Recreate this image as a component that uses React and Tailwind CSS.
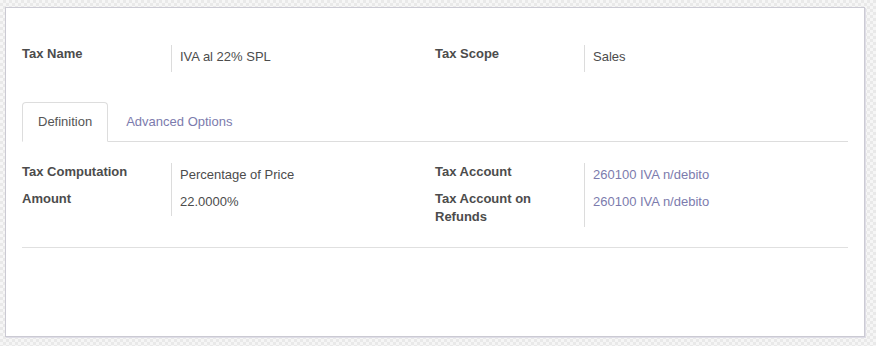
const Field = ({ label, children }) => (
    <>
        <div className="font-bold text-[#4c4c4c] leading-[1.42857]">{label}</div>
        <div className="border-l border-[#dcdcdc] pl-2 pt-[3px] pb-[5px] leading-[1.42857] text-[#4c4c4c]">
            {children}
        </div>
    </>
);

const Link = ({ children }) => <span className="text-[#7c7bad]">{children}</span>;

const App = () => {
    return (
        <div className="w-[876px] h-[346px] pl-[5px] pt-[7px] bg-[#f0f0f0] bg-[image:repeating-conic-gradient(#e9e9e9_0%_25%,#f6f6f6_0%_50%)] bg-[length:6px_6px] font-['Liberation_Sans',Arial,sans-serif] text-[13px]">
            <div className="w-[860px] h-[330px] bg-white border border-[#cbcad3] shadow-[1px_1px_0_#dedde6] px-4 pt-[37px]">
                {/* header fields */}
                <div className="grid grid-cols-2">
                    <div className="grid grid-cols-[149px_1fr]">
                        <Field label="Tax Name">IVA al 22% SPL</Field>
                    </div>
                    <div className="grid grid-cols-[149px_1fr]">
                        <Field label="Tax Scope">Sales</Field>
                    </div>
                </div>

                {/* tabs */}
                <div className="mt-[30px] flex border-b border-[#dddddd]">
                    <div className="-mb-px px-[15px] py-[10px] leading-[1.42857] border border-[#dddddd] border-b-white rounded-t bg-white text-[#555555]">
                        Definition
                    </div>
                    <div className="ml-[2px] -mb-px px-[15px] py-[10px] leading-[1.42857] border border-transparent text-[#7c7bad]">
                        Advanced Options
                    </div>
                </div>

                {/* definition tab */}
                <div className="mt-[21px] grid grid-cols-2 items-start">
                    <div className="grid grid-cols-[149px_1fr]">
                        <Field label="Tax Computation">Percentage of Price</Field>
                        <Field label="Amount">22.0000%</Field>
                    </div>
                    <div className="grid grid-cols-[149px_1fr]">
                        <Field label="Tax Account">
                            <Link>260100 IVA n/debito</Link>
                        </Field>
                        <Field label={<>Tax Account on<br />Refunds</>}>
                            <Link>260100 IVA n/debito</Link>
                        </Field>
                    </div>
                </div>

                <div className="mt-5 border-t border-[#e0e0e0]" />
            </div>
        </div>
    );
};

export default App;
